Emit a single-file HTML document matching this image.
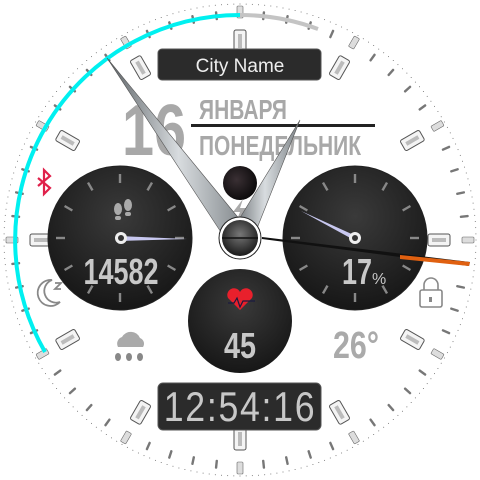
<!DOCTYPE html><html><head><meta charset="utf-8"><style>
html,body{margin:0;padding:0;background:#fff;width:480px;height:480px;overflow:hidden}
svg{display:block}
text{font-family:"Liberation Sans Narrow","Liberation Sans",sans-serif}
</style></head><body>
<svg id="s" width="480" height="480" viewBox="0 0 480 480">
<defs>
<radialGradient id="dial" cx="50%" cy="35%" r="70%"><stop offset="0" stop-color="#3a3a3a"/><stop offset="1" stop-color="#141414"/></radialGradient>
<linearGradient id="hand" x1="0" y1="0" x2="1" y2="0"><stop offset="0" stop-color="#5a6064"/><stop offset="0.5" stop-color="#d8dcdf"/><stop offset="1" stop-color="#7a8084"/></linearGradient>
<radialGradient id="cap" cx="50%" cy="40%" r="60%"><stop offset="0" stop-color="#777"/><stop offset="1" stop-color="#1a1a1a"/></radialGradient>
<radialGradient id="moon" cx="40%" cy="40%" r="60%"><stop offset="0" stop-color="#3a3034"/><stop offset="1" stop-color="#0e0c0d"/></radialGradient>
</defs>
<g id="ticks"></g>
<path d="M240 15 A225 225 0 0 1 318 29" fill="none" stroke="#c4c4c4" stroke-width="4"/>
<path d="M240 15 A225 225 0 0 0 45 352" fill="none" stroke="#00f0f0" stroke-width="4"/>
<rect x="158" y="49" width="163" height="31" rx="4" fill="#2b2b2b" stroke="#555"/>
<text x="240" y="72" text-anchor="middle" font-size="19" fill="#eee" style="font-family:'Liberation Sans',sans-serif">City Name</text>
<text x="122" y="155" font-size="72" fill="#a8a8a8" font-weight="bold" transform="scale(0.8,1)" style="transform-origin:122px 155px">16</text>
<text x="199" y="119" font-size="28" fill="#a8a8a8" font-weight="bold" textLength="88" lengthAdjust="spacingAndGlyphs">ЯНВАРЯ</text>
<rect x="191" y="124" width="184" height="3" fill="#222"/>
<text x="199" y="155" font-size="28" fill="#a8a8a8" font-weight="bold" textLength="162" lengthAdjust="spacingAndGlyphs">ПОНЕДЕЛЬНИК</text>
<circle cx="240" cy="183" r="17" fill="url(#moon)"/>
<g id="dials"></g>
<circle cx="240" cy="321" r="52" fill="url(#dial)"/>
<path d="M38 178 L50 188 L44 194 L44 170 L50 176 L38 186" fill="none" stroke="#e0204a" stroke-width="2.2"/>
<g fill="#aaa"><ellipse cx="118" cy="209" rx="4" ry="6"/><ellipse cx="128" cy="205" rx="4" ry="6"/><rect x="115" y="216" width="6" height="4" rx="2"/><rect x="125" y="212" width="6" height="4" rx="2"/></g>
<path d="M243 199 L233 212 L240 212 L236 222 L247 208 L240 208 Z" fill="#aaa"/>
<path d="M52 280 A13 13 0 1 0 60 302 A10 10 0 0 1 52 280 Z" fill="none" stroke="#888" stroke-width="1.8"/>
<path d="M55 283 h6 l-6 6 h6" fill="none" stroke="#888" stroke-width="1.8"/>
<rect x="420" y="290" width="22" height="17" rx="2" fill="none" stroke="#888" stroke-width="1.6"/>
<path d="M424 290 v-5 a7 7 0 0 1 14 0 v5" fill="none" stroke="#888" stroke-width="1.6"/>
<rect x="429" y="297" width="3" height="5" fill="#888"/>
<path d="M118 347 a7 7 0 0 1 4 -10 a10 10 0 0 1 18 1 a6 6 0 0 1 3 9 Z" fill="#aaa"/>
<g fill="#888"><ellipse cx="118" cy="357" rx="3" ry="4"/><ellipse cx="129" cy="357" rx="3" ry="4"/><ellipse cx="140" cy="357" rx="3" ry="4"/></g>
<path d="M240 310 l-12 -12 a6 6 0 0 1 12 -6 a6 6 0 0 1 12 6 Z" fill="#e8202c"/>
<path d="M228 303 h6 l3 -5 l3 9 l3 -6 h12" fill="none" stroke="#1a1a40" stroke-width="1.2"/>
<text x="121" y="284" text-anchor="middle" font-size="36" fill="#c8c8c8" font-weight="bold" transform="scale(0.75,1)" style="transform-origin:121px 284px">14582</text>
<text x="357" y="284" text-anchor="middle" font-size="36" fill="#c8c8c8" font-weight="bold" transform="scale(0.75,1)" style="transform-origin:357px 284px">17</text>
<text x="372" y="284" font-size="16" fill="#c8c8c8">%</text>
<text x="240" y="358" text-anchor="middle" font-size="36" fill="#c8c8c8" font-weight="bold" transform="scale(0.8,1)" style="transform-origin:240px 358px">45</text>
<text x="356" y="358" text-anchor="middle" font-size="38" fill="#aaa" font-weight="bold" transform="scale(0.8,1)" style="transform-origin:356px 358px">26°</text>
<rect x="158" y="383" width="163" height="47" rx="5" fill="#2b2b2b" stroke="#555"/>
<text x="240" y="421" text-anchor="middle" font-size="42" fill="#c8c8c8" letter-spacing="2" transform="scale(0.85,1)" style="transform-origin:240px 421px">12:54:16</text>
<path d="M120 236 L187 239 L120 241 Z" fill="#c8c8f0"/>
<circle cx="121" cy="238" r="6" fill="#eee"/><circle cx="121" cy="238" r="3" fill="#333"/>
<path d="M356 236 L301 211 L354 240 Z" fill="#c8c8f0"/>
<circle cx="355" cy="238" r="6" fill="#eee"/><circle cx="355" cy="238" r="3" fill="#333"/>
<path d="M107 58 L250 232 L230 246 Z" fill="url(#hand)" stroke="#555" stroke-width="0.6"/>
<path d="M300 120 L250 246 L230 234 Z" fill="url(#hand)" stroke="#555" stroke-width="0.6"/>
<path d="M262 237 L470 262 L469 266 L262 239 Z" fill="#111"/>
<path d="M400 255 L470 262 L469 266 L400 259 Z" fill="#e06010"/>
<circle cx="240" cy="238" r="21" fill="#fff" stroke="#222" stroke-width="1"/>
<circle cx="240" cy="238" r="18" fill="url(#cap)"/>
<line x1="222" y1="238" x2="258" y2="238" stroke="#111" stroke-width="1.5"/>
</svg>
<script>
var g=document.getElementById('ticks'),h='';
for(var i=0;i<60;i++){var a=i*6;
 if(i%5==0){
  h+='<rect x="-3" y="-234" width="6" height="12" rx="1" fill="#ddd" stroke="#666" stroke-width="0.6" transform="translate(240 240) rotate('+a+')"/>';
  h+='<rect x="-6" y="-210" width="12" height="22" rx="2" fill="#f4f4f4" stroke="#555" stroke-width="1" transform="translate(240 240) rotate('+a+')"/>';
  h+='<rect x="-2" y="-206" width="4" height="14" fill="#bbb" transform="translate(240 240) rotate('+a+')"/>';
 } else {
  h+='<rect x="-1.2" y="-230" width="2.4" height="9" rx="1" fill="#777" transform="translate(240 240) rotate('+a+')"/>';
 }
}
for(var j=0;j<240;j++){var b=j*1.5*Math.PI/180;h+='<circle cx="'+(240+236*Math.sin(b))+'" cy="'+(240-236*Math.cos(b))+'" r="0.5" fill="#666"/>';}
g.innerHTML=h;
var d=document.getElementById('dials'),s='';
[[120,238],[355,238]].forEach(function(c){
 s+='<circle cx="'+c[0]+'" cy="'+c[1]+'" r="72" fill="url(#dial)" stroke="#222"/>';
 for(var k=0;k<12;k++){var an=-150+k*30;
  s+='<rect x="-1.2" y="-64" width="2.4" height="9" fill="#888" transform="translate('+c[0]+' '+c[1]+') rotate('+an+')"/>';}
});
d.innerHTML=s;
</script>
</body></html>
